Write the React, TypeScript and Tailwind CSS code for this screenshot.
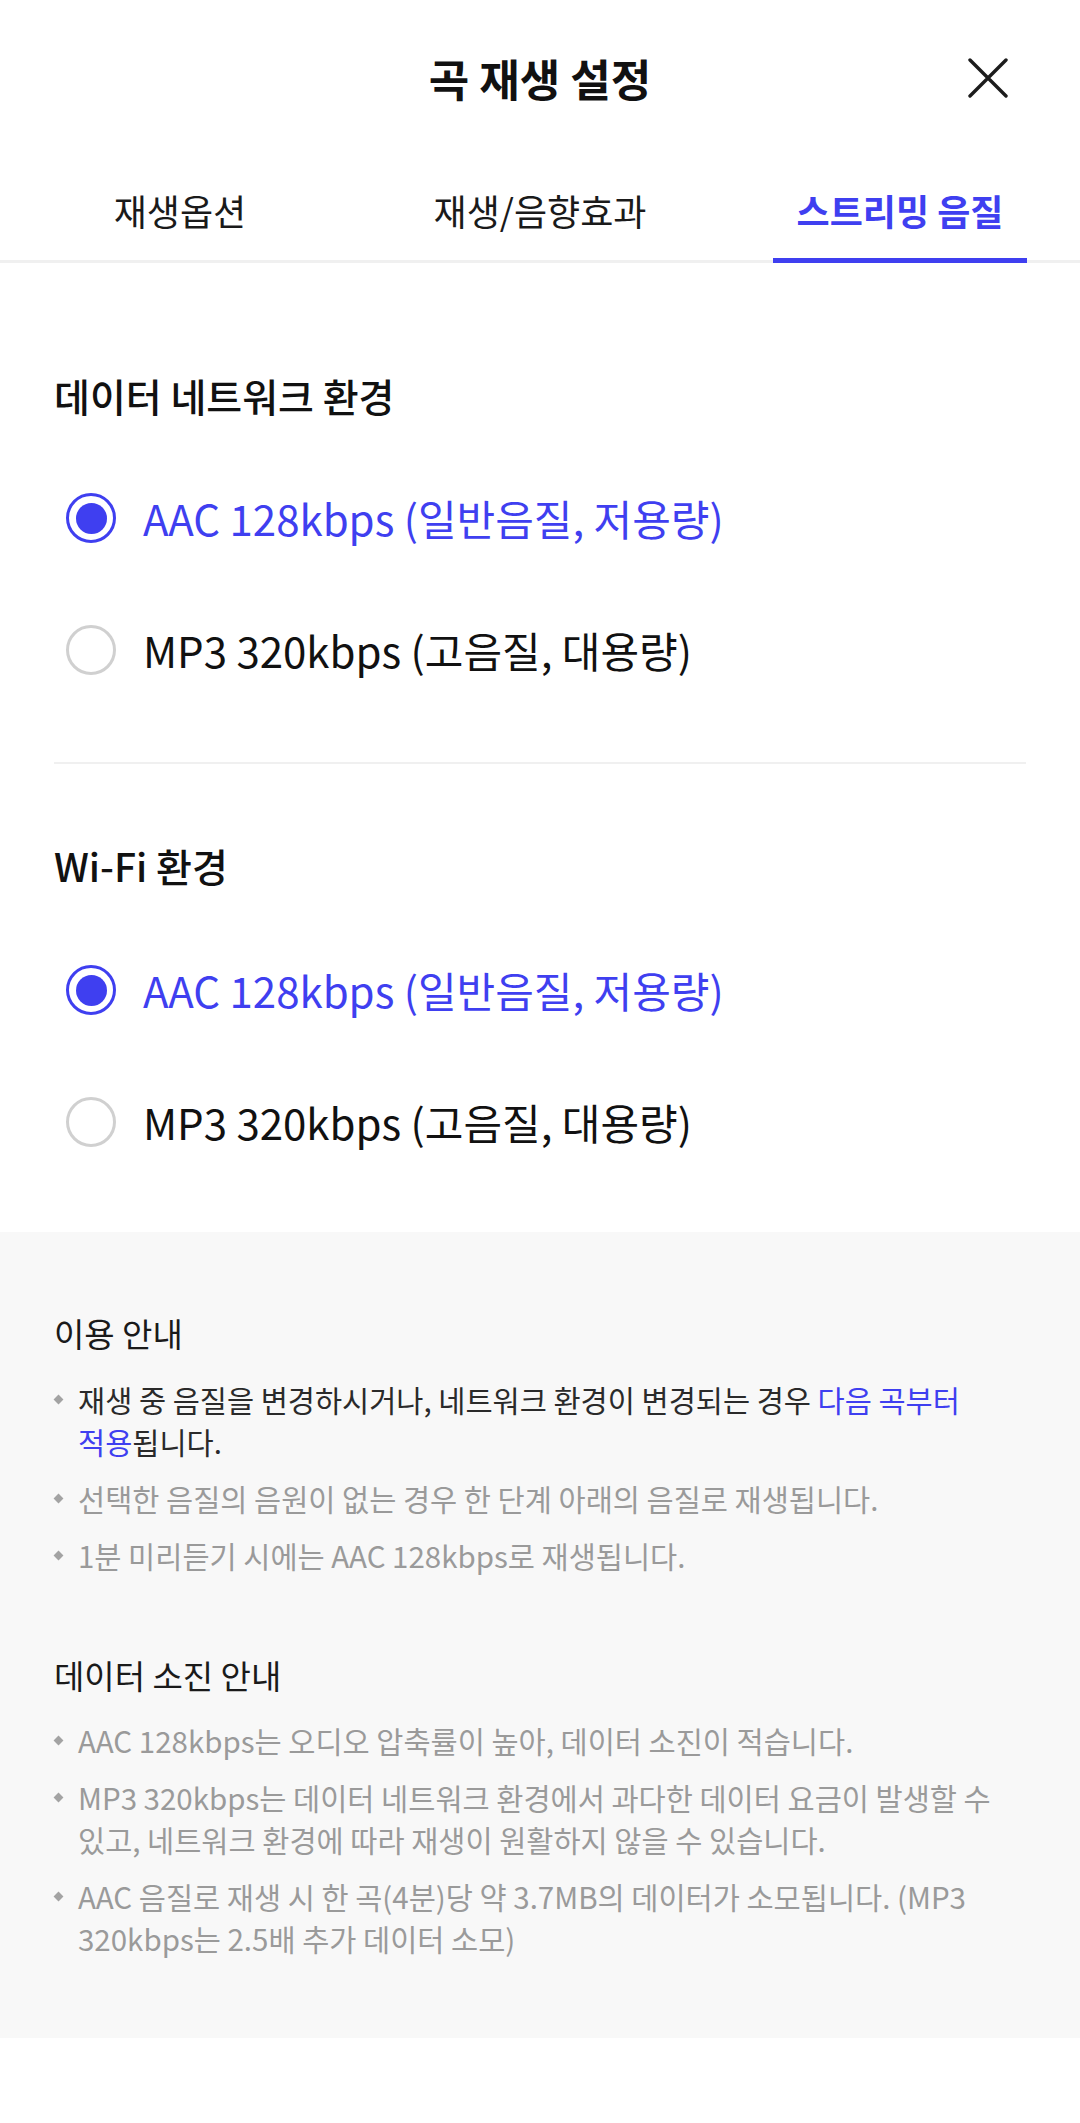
import { useState } from "react";

const FONT = "font-['Noto_Sans_CJK_KR','Noto_Sans',sans-serif]";

type Option = { id: string; label: string };

const OPTIONS: Option[] = [
  { id: "aac", label: "AAC 128kbps (일반음질, 저용량)" },
  { id: "mp3", label: "MP3 320kbps (고음질, 대용량)" },
];

function CloseIcon() {
  return (
    <svg width="40" height="40" viewBox="0 0 40 40" fill="none">
      <path d="M2 2L38 38M38 2L2 38" stroke="#1c1c1c" strokeWidth="3.4" strokeLinecap="round" />
    </svg>
  );
}

function Radio({ checked }: { checked: boolean }) {
  return (
    <span
      className={`ml-[12px] flex h-[50px] w-[50px] shrink-0 items-center justify-center rounded-full border-[3px] ${
        checked ? "border-[#3f3ff0]" : "border-[#d0d0d0]"
      }`}
    >
      {checked && <span className="h-[31px] w-[31px] rounded-full bg-[#3f3ff0]" />}
    </span>
  );
}

function RadioGroup({
  title,
  value,
  onChange,
  gapTop,
}: {
  title: string;
  value: string;
  onChange: (v: string) => void;
  gapTop: string;
}) {
  return (
    <div>
      <h2 className="text-[39px] leading-[50px] font-medium text-[#111]">{title}</h2>
      <div className={gapTop}>
        {OPTIONS.map((o) => {
          const checked = o.id === value;
          return (
            <button
              key={o.id}
              onClick={() => onChange(o.id)}
              className="flex h-[132px] w-full items-center gap-[27px] text-left"
            >
              <Radio checked={checked} />
              <span
                className={`text-[42px] leading-[62px] ${
                  checked ? "text-[#3f3ff0]" : "text-[#111]"
                }`}
              >
                {o.label}
              </span>
            </button>
          );
        })}
      </div>
    </div>
  );
}

function Bullet({ children, dark }: { children: React.ReactNode; dark?: boolean }) {
  return (
    <li className="flex">
      <span className="flex h-[42px] w-[24px] shrink-0 items-center pl-[1px]">
        <span className="h-[7px] w-[7px] rotate-45 bg-[#a3a3a3]" />
      </span>
      <p
        className={`break-keep text-[29.5px] leading-[42px] ${
          dark ? "text-[#2a2a2a]" : "text-[#9a9a9a]"
        }`}
      >
        {children}
      </p>
    </li>
  );
}

export default function App() {
  const [tab, setTab] = useState(2);
  const [cellular, setCellular] = useState("aac");
  const [wifi, setWifi] = useState("aac");

  const tabs = ["재생옵션", "재생/음향효과", "스트리밍 음질"];

  return (
    <div className={`min-h-[2123px] w-[1080px] bg-white ${FONT}`}>
      <header className="grid h-[156px] grid-cols-[1fr_auto_1fr] items-center">
        <div />
        <h1 className="text-[44px] font-bold text-[#111]">곡 재생 설정</h1>
        <div className="flex justify-end pr-[72px]">
          <button aria-label="닫기">
            <CloseIcon />
          </button>
        </div>
      </header>

      <nav className="grid grid-cols-3 border-b-[3px] border-[#f0f0f0]">
        {tabs.map((t, i) => {
          const active = i === tab;
          return (
            <button
              key={t}
              onClick={() => setTab(i)}
              className="flex flex-col items-center pt-[32px]"
            >
              <span
                className={`text-[36px] leading-[44px] ${
                  active ? "font-bold text-[#3f3ff0]" : "text-[#1a1a1a]"
                }`}
              >
                {t}
              </span>
              <span
                className={`mt-[26px] -mb-[3px] h-[5px] w-[254px] ${
                  active ? "bg-[#3f3ff0]" : "bg-transparent"
                }`}
              />
            </button>
          );
        })}
      </nav>

      <section className="px-[54px] pt-[107px] pb-[44px]">
        <RadioGroup title="데이터 네트워크 환경" value={cellular} onChange={setCellular} gapTop="mt-[32px]" />
        <div className="mt-[46px] mb-[76px] h-[2px] bg-[#f0f0f0]" />
        <RadioGroup title="Wi-Fi 환경" value={wifi} onChange={setWifi} gapTop="mt-[34px]" />
      </section>

      <section className="bg-[#f8f8f8] px-[54px] pt-[80px] pb-[79px]">
        <h3 className="text-[33px] leading-[42px] text-[#1a1a1a]">이용 안내</h3>
        <ul className="mt-[24px] flex flex-col gap-[15px]">
          <Bullet dark>
            재생 중 음질을 변경하시거나, 네트워크 환경이 변경되는 경우{" "}
            <span className="text-[#3f3ff0]">다음 곡부터</span>{" "}
            <span className="text-[#3f3ff0]">적용</span>됩니다.
          </Bullet>
          <Bullet>선택한 음질의 음원이 없는 경우 한 단계 아래의 음질로 재생됩니다.</Bullet>
          <Bullet>1분 미리듣기 시에는 AAC 128kbps로 재생됩니다.</Bullet>
        </ul>

        <h3 className="mt-[78px] text-[33px] leading-[42px] text-[#1a1a1a]">데이터 소진 안내</h3>
        <ul className="mt-[23px] flex flex-col gap-[15px]">
          <Bullet>AAC 128kbps는 오디오 압축률이 높아, 데이터 소진이 적습니다.</Bullet>
          <Bullet>
            MP3 320kbps는 데이터 네트워크 환경에서 과다한 데이터 요금이 발생할 수 있고, 네트워크 환경에
            따라 재생이 원활하지 않을 수 있습니다.
          </Bullet>
          <Bullet>
            AAC 음질로 재생 시 한 곡(4분)당 약 3.7MB의 데이터가 소모됩니다. (MP3 320kbps는 2.5배 추가
            데이터 소모)
          </Bullet>
        </ul>
      </section>
    </div>
  );
}
